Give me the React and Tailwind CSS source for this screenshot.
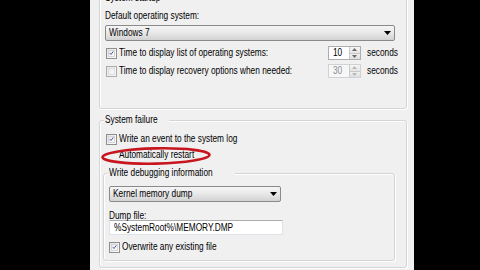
import React from 'react';

// text in the shot is squeezed horizontally, so each label gets a scale-x
const Txt = ({ children, className = '' }) => (
  <span className={`inline-block origin-left scale-x-[0.83] whitespace-nowrap ${className}`}>{children}</span>
);

const Check = ({ checked }) => (
  <span className="flex h-[11px] w-[11px] shrink-0 border border-[#8e8f8f] bg-gradient-to-br from-[#e2e2e2] to-white p-[1px]">
    <span className="flex h-full w-full items-center justify-center border border-[#d6d6d6] bg-gradient-to-br from-[#e9e9e9] to-white">
      {checked && (
        <svg width="8" height="8" viewBox="0 0 8 8">
          <path d="M1.2 4.2 L3.2 6.4 L6.9 1.3" fill="none" stroke="#3a4a8f" strokeWidth="1.4" />
        </svg>
      )}
    </span>
  </span>
);

const Combo = ({ text, className = '' }) => (
  <div
    className={`flex h-[16px] items-center justify-between rounded-[2px] border border-[#8a8a8a] bg-gradient-to-b from-[#f5f5f5] via-[#e8e8e8] to-[#d2d2d2] pl-[3px] pr-[3px] leading-[12px] ${className}`}
  >
    <Txt>{text}</Txt>
    <svg width="7" height="4" viewBox="0 0 7 4" className="shrink-0">
      <path d="M0 0h7L3.5 4z" fill="#000" />
    </svg>
  </div>
);

const Spin = ({ value, disabled }) => (
  <div
    className={`ml-auto flex h-[14px] w-[33px] border ${
      disabled ? 'border-[#d0d2d6] bg-[#f7f7f7]' : 'border-[#abadb3] bg-white'
    }`}
  >
    <div className={`flex-1 pl-[4px] leading-[12px] ${disabled ? 'text-[#8d8d8d]' : ''}`}>
      <Txt>{value}</Txt>
    </div>
    <div className="flex w-[11px] flex-col border-l border-[#c9c9c9]">
      <div className="flex flex-1 items-center justify-center border-b border-[#c9c9c9] bg-gradient-to-b from-[#f6f6f6] to-[#e4e4e4]">
        <svg width="5" height="3" viewBox="0 0 5 3">
          <path d="M0 3h5L2.5 0z" fill={disabled ? '#b8b8b8' : '#6a6a6a'} />
        </svg>
      </div>
      <div className="flex flex-1 items-center justify-center bg-gradient-to-b from-[#f0f0f0] to-[#dedede]">
        <svg width="5" height="3" viewBox="0 0 5 3">
          <path d="M0 0h5L2.5 3z" fill={disabled ? '#b8b8b8' : '#6a6a6a'} />
        </svg>
      </div>
    </div>
  </div>
);

const Legend = ({ children }) => (
  <div className="absolute -top-[7px] left-[4px] bg-[#f0f0f0] px-[1px] leading-[12px]">
    <Txt>{children}</Txt>
  </div>
);

const box = 'relative rounded-[3px] border border-[#d3d6d9] shadow-[inset_1px_1px_0_#ffffff,1px_1px_0_#ffffff]';

export default function App() {
  return (
    <div className="h-[270px] w-[480px] overflow-hidden bg-black font-['Liberation_Sans',Arial,sans-serif] text-[10px] text-black">
      <div className="ml-[90px] flex h-full w-[301px]">
        <div className="w-[4px] bg-gradient-to-b from-[#a3b0c2] via-[#6f8cb2] to-[#6b89b0]" />

        <div className="flex-1 bg-[#f0f0f0] pl-[9px] pr-[7px]">
          {/* System startup */}
          <div className={`${box} -mt-[2px] h-[111px] pl-[5px] pr-[11px] pt-[11px]`}>
            <Legend>System startup</Legend>
            <div className="h-[12px] leading-[12px]">
              <Txt>Default operating system:</Txt>
            </div>
            <Combo text="Windows 7" className="mt-[3px]" />
            <div className="-mr-[3px] mt-[5px] flex h-[14px] items-center">
              <span className="ml-[1px]">
                <Check checked />
              </span>
              <div className="ml-[2px] leading-[12px]">
                <Txt>Time to display list of operating systems:</Txt>
              </div>
              <Spin value="10" />
              <div className="ml-[6px] w-[31px] leading-[12px]">
                <Txt>seconds</Txt>
              </div>
            </div>
            <div className="-mr-[3px] mt-[4px] flex h-[14px] items-center">
              <span className="ml-[1px] opacity-70">
                <Check />
              </span>
              <div className="ml-[2px] leading-[12px]">
                <Txt>Time to display recovery options when needed:</Txt>
              </div>
              <Spin value="30" disabled />
              <div className="ml-[6px] w-[31px] leading-[12px]">
                <Txt>seconds</Txt>
              </div>
            </div>
          </div>

          {/* System failure */}
          <div className={`${box} mt-[11px] h-[148px] pl-[6px] pr-[11px] pt-[12px]`}>
            <Legend>System failure</Legend>
            <div className="flex h-[12px] items-center">
              <Check checked />
              <div className="ml-[2px] leading-[12px]">
                <Txt>Write an event to the system log</Txt>
              </div>
            </div>
            <div className="relative mt-[4px] flex h-[12px] items-center">
              <span className="w-[11px]" />
              <div className="ml-[2px] leading-[12px]">
                <Txt>Automatically restart</Txt>
              </div>
              <svg
                width="112"
                height="20"
                viewBox="0 0 112 20"
                className="absolute -left-[6px] -top-[3px]"
              >
                <ellipse
                  cx="56"
                  cy="10"
                  rx="53.5"
                  ry="7.6"
                  fill="none"
                  stroke="#c8161f"
                  strokeWidth="2.6"
                  transform="rotate(-1.2 56 10)"
                />
              </svg>
            </div>

            <div className={`${box} -ml-[3px] mt-[12px] h-[88px] pl-[5px] pt-[12px]`}>
              <Legend>Write debugging information</Legend>
              <Combo text="Kernel memory dump" className="w-[172px]" />
              <div className="mt-[9px] h-[9px] leading-[9px]">
                <Txt>Dump file:</Txt>
              </div>
              <div className="h-[15px] w-[174px] border border-[#dfe2e8] border-t-[#abadb3] bg-white pl-[4px] leading-[13px]">
                <Txt>%SystemRoot%\MEMORY.DMP</Txt>
              </div>
              <div className="mt-[6px] flex h-[12px] items-center">
                <Check checked />
                <div className="ml-[2px] leading-[12px]">
                  <Txt>Overwrite any existing file</Txt>
                </div>
              </div>
            </div>
          </div>
        </div>

        <div className="w-[7px] bg-gradient-to-r from-[#4f6685] via-[#a6b8cd] to-[#34475f]" />
      </div>
    </div>
  );
}
